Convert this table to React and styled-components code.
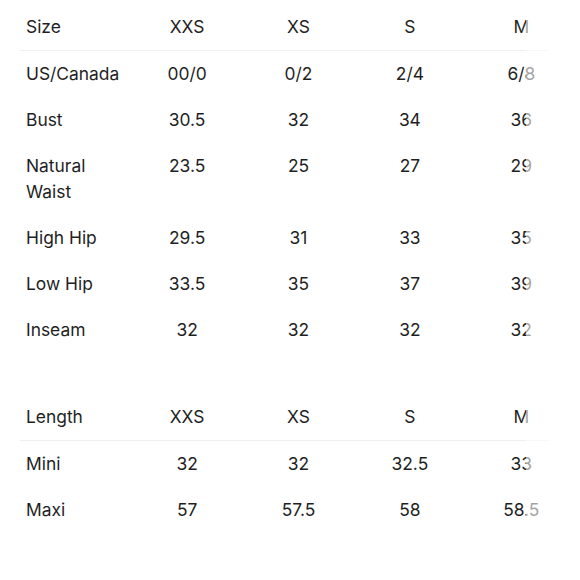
import React from "react";
import styled, { createGlobalStyle } from "styled-components";

const Global = createGlobalStyle`
  html, body { margin: 0; padding: 0; background: #fff; }
  body { font-family: "Inter", "Liberation Sans", sans-serif; color: #1f1f1f; }
  *, *::before, *::after { box-sizing: border-box; }
`;

const Page = styled.div`
  padding: 4px 0 0 20px;
  display: flex;
  flex-direction: column;
  gap: 41px;
`;

const Scroller = styled.div`
  position: relative;
  width: 530px;
  overflow: hidden;
`;

const Fade = styled.div`
  position: absolute;
  top: 0;
  bottom: 0;
  left: 506px;
  width: 24px;
  background: rgba(255, 255, 255, 0.58);
  pointer-events: none;
`;

const Table = styled.table`
  width: 557px;
  table-layout: fixed;
  border-collapse: collapse;
  font-size: 17.4px;
  line-height: 26px;
`;

const HeadRow = styled.tr`
  border-bottom: 1.5px solid #efefef;
`;

const Cell = styled.td`
  width: 111.4px;
  padding: 10px 0 10px ${(p) => (p.$label ? "6px" : "0")};
  vertical-align: top;
  text-align: ${(p) => (p.$label ? "left" : "center")};
  font-weight: 400;
  color: #1f1f1f;
`;

const sizes = ["XXS", "XS", "S", "M"];

const SizeTable = ({ title, rows }) => (
  <Scroller>
    <Table>
      <thead>
        <HeadRow>
          <Cell as="th" $label>{title}</Cell>
          {sizes.map((s) => (
            <Cell as="th" key={s}>{s}</Cell>
          ))}
        </HeadRow>
      </thead>
      <tbody>
        {rows.map(([label, ...vals], r) => (
          <tr key={r}>
            <Cell $label>{label}</Cell>
            {vals.map((v, i) => (
              <Cell key={i}>{v}</Cell>
            ))}
          </tr>
        ))}
      </tbody>
    </Table>
    <Fade />
  </Scroller>
);

const bodyRows = [
  ["US/Canada", "00/0", "0/2", "2/4", "6/8"],
  ["Bust", "30.5", "32", "34", "36"],
  [<>Natural<br />Waist</>, "23.5", "25", "27", "29"],
  ["High Hip", "29.5", "31", "33", "35"],
  ["Low Hip", "33.5", "35", "37", "39"],
  ["Inseam", "32", "32", "32", "32"],
];

const lengthRows = [
  ["Mini", "32", "32", "32.5", "33"],
  ["Maxi", "57", "57.5", "58", "58.5"],
];

export default function App() {
  return (
    <>
      <Global />
      <Page>
        <SizeTable title="Size" rows={bodyRows} />
        <SizeTable title="Length" rows={lengthRows} />
      </Page>
    </>
  );
}
